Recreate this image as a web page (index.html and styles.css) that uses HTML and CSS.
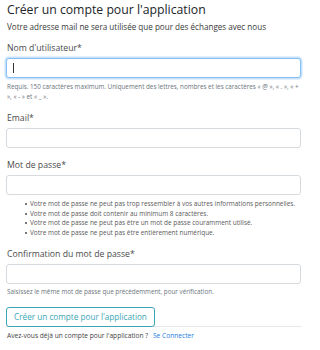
FILE: index.html
```
<!DOCTYPE html>
<html lang="fr">
<head>
<meta charset="utf-8">
<title>Créer un compte</title>
<link rel="stylesheet" href="styles.css">
</head>
<body>
<main class="page">
  <h1 class="title">Créer un compte pour l'application</h1>
  <p class="lead">Votre adresse mail ne sera utilisée que pour des échanges avec nous</p>
  <form class="form">
    <div class="group">
      <label class="label">Nom d'utilisateur*</label>
      <div class="input focused"><span class="caret"></span></div>
      <p class="help">Requis. 150 caractères maximum. Uniquement des lettres, nombres et les caractères « @ », « . », « + », « - » et « _ ».</p>
    </div>
    <div class="group g-email">
      <label class="label">Email*</label>
      <div class="input"></div>
    </div>
    <div class="group g-pass">
      <label class="label">Mot de passe*</label>
      <div class="input"></div>
      <ul class="rules">
        <li>Votre mot de passe ne peut pas trop ressembler à vos autres informations personnelles.</li>
        <li>Votre mot de passe doit contenir au minimum 8 caractères.</li>
        <li>Votre mot de passe ne peut pas être un mot de passe couramment utilisé.</li>
        <li>Votre mot de passe ne peut pas être entièrement numérique.</li>
      </ul>
    </div>
    <div class="group g-confirm">
      <label class="label">Confirmation du mot de passe*</label>
      <div class="input"></div>
      <p class="help help-one">Saisissez le même mot de passe que précédemment, pour vérification.</p>
    </div>
    <div class="actions">
      <button type="button" class="btn">Créer un compte pour l'application</button>
    </div>
  </form>
  <p class="login">Avez-vous déjà un compte pour l'application ? <a class="link" href="#">Se Connecter</a></p>
</main>
</body>
</html>
```
FILE: styles.css
```
* { box-sizing: border-box; }
html, body { margin: 0; padding: 0; background: #fff; }
body {
  font-family: "Open Sans", "Noto Sans", "Liberation Sans", sans-serif;
  color: #212529;
}
.page {
  width: 309px;
  padding: 0 8px 0 6px;
}
.title {
  margin: 0;
  font-size: 12.25px;
  line-height: 20px;
  font-weight: 400;
  color: #212529;
  padding-left: 1px;
}
.lead {
  margin: 1px 0 0;
  font-size: 8.1px;
  line-height: 12px;
  color: #3a3a3a;
  padding-left: 1px;
  white-space: nowrap;
}
.form { display: flex; flex-direction: column; }
.group { display: flex; flex-direction: column; }
.group:first-child { margin-top: 9px; }
.label {
  font-size: 8.7px;
  line-height: 12px;
  color: #4a4a4a;
  padding-left: 1px;
  margin-bottom: 4px;
}
.input {
  height: 20px;
  width: 295px;
  border: 1px solid #d5dadf;
  border-radius: 3px;
  background: #fff;
  display: flex;
  align-items: center;
  padding-left: 6px;
}
.input.focused {
  border-color: #86bff5;
  box-shadow: 0 0 0 1.5px rgba(0, 123, 255, 0.22);
}
.caret {
  width: 1px;
  height: 10px;
  background: #333;
}
.help {
  margin: 4px 0 0;
  font-size: 6.3px;
  line-height: 10px;
  color: #6c757d;
  padding-left: 1px;
}
.help-one { margin-top: 3px; }
.g-email { margin-top: 10px; }
.g-pass { margin-top: 11px; }
.g-confirm { margin-top: 10px; }
.rules {
  margin: 4px 0 0;
  padding-left: 24px;
  font-size: 6.45px;
  line-height: 9.7px;
  color: #5a5a5a;
  list-style: none;
}
.rules li { position: relative; white-space: nowrap; }
.rules li::before {
  content: "";
  position: absolute;
  left: -5px;
  top: 4px;
  width: 2px;
  height: 2px;
  background: #777;
}
.actions {
  margin-top: 10px;
  border-bottom: 1px solid #e6e8ea;
  width: 296px;
  display: flex;
}
.btn {
  height: 20px;
  width: 149px;
  margin-bottom: -1px;
  border: 1px solid #3aa6b5;
  border-radius: 3px;
  background: #fff;
  color: #3aa6b5;
  font-family: inherit;
  font-size: 8.2px;
  padding: 0;
  cursor: pointer;
}
.login {
  margin: 4px 0 0;
  font-size: 6.65px;
  line-height: 10px;
  color: #444;
  padding-left: 1px;
}
.link { color: #1e7be0; text-decoration: none; margin-left: 3px; }
```
